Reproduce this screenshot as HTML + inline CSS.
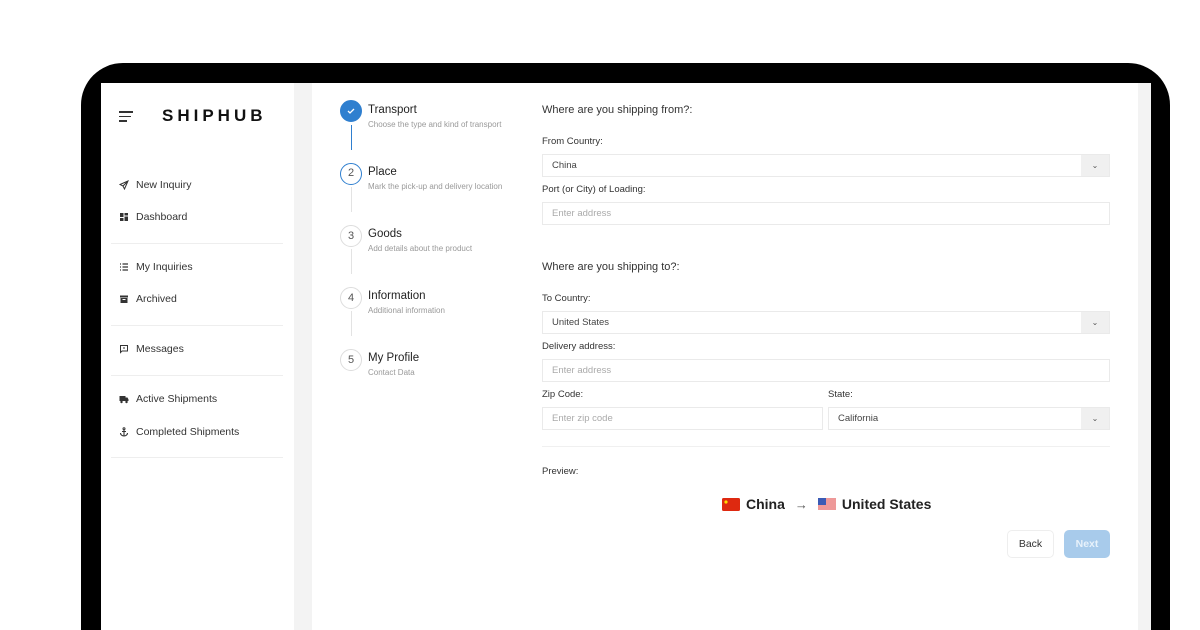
<!DOCTYPE html>
<html><head><meta charset="utf-8"><style>
*{box-sizing:border-box;margin:0;padding:0}
html{width:1200px;height:630px;overflow:hidden}
body{width:1200px;height:630px;background:#fff;font-family:"Liberation Sans",sans-serif;position:relative;overflow:hidden;color:#222}
.frame{position:absolute;left:81px;top:63px;width:1089px;height:567px;background:#000;border-radius:42px 42px 0 0}
.screen{position:absolute;left:101px;top:83px;width:1050px;height:547px;background:#f3f3f3}
.side{position:absolute;left:0;top:0;width:193px;height:547px;background:#fff}
.main{position:absolute;left:211px;top:0;width:826px;height:547px;background:#fff}
.abs{position:absolute}
.nav{position:absolute;left:18px;font-size:10.5px;color:#333;display:flex;align-items:center}
.nav svg{width:10px;height:10px;margin-right:7px}
.sep{position:absolute;left:10px;width:172px;height:1px;background:#eee}
.circ{position:absolute;left:0;width:22px;height:22px;border-radius:50%;border:1px solid #ddd;font-size:11px;color:#555;text-align:center;line-height:20px;background:#fff}
.st{position:absolute;font-size:11.5px;color:#222;white-space:nowrap}
.ss{position:absolute;font-size:8px;color:#999;white-space:nowrap}
.vl{position:absolute;width:1.5px;background:#e3e3e3}
.h{position:absolute;font-size:11px;color:#333}
.lbl{position:absolute;font-size:9.5px;color:#333}
.inp{position:absolute;height:23px;border:1px solid #eaeaea;background:#fff;font-size:9.5px;color:#aaa;padding-left:9px;line-height:21px}
.sel{color:#444}
.dd{position:absolute;right:0;top:0;width:28px;height:21px;background:#f0f0f0;font-size:8px;color:#555;text-align:center;line-height:21px}
</style></head><body>
<div class="frame"></div>
<div class="screen">
 <div class="side">
  <div class="abs" style="left:18px;top:28px;width:14px">
   <div style="height:1.5px;background:#333;width:14px;margin-bottom:3px"></div>
   <div style="height:1.5px;background:#333;width:12px;margin-bottom:3px"></div>
   <div style="height:1.5px;background:#333;width:8px"></div>
  </div>
  <div class="abs" style="left:61px;top:23px;font-size:17px;font-weight:bold;letter-spacing:4px;color:#111">SHIPHUB</div>
  <div class="nav" style="top:96px"><svg viewBox="0 0 10 10"><path d="M9 1L1 4.5 4 6 5.5 9z M4 6L9 1" fill="none" stroke="#333" stroke-width="1"/></svg>New Inquiry</div>
  <div class="nav" style="top:128px"><svg viewBox="0 0 10 10"><rect x="1" y="1" width="3.5" height="4" fill="#333"/><rect x="5.5" y="1" width="3.5" height="2.5" fill="#333"/><rect x="1" y="6" width="3.5" height="3" fill="#333"/><rect x="5.5" y="4.5" width="3.5" height="4.5" fill="#333"/></svg>Dashboard</div>
  <div class="sep" style="top:160px"></div>
  <div class="nav" style="top:178px"><svg viewBox="0 0 10 10"><path d="M1 2h1M3.5 2H9M1 5h1M3.5 5H9M1 8h1M3.5 8H9" stroke="#333" stroke-width="1.2"/></svg>My Inquiries</div>
  <div class="nav" style="top:210px"><svg viewBox="0 0 10 10"><rect x="1" y="1.5" width="8" height="2" fill="#333"/><rect x="1.5" y="4" width="7" height="5" fill="#333"/><rect x="3.5" y="5" width="3" height="1" fill="#fff"/></svg>Archived</div>
  <div class="sep" style="top:242px"></div>
  <div class="nav" style="top:260px"><svg viewBox="0 0 10 10"><path d="M1.5 1.5h7v5.5H3L1.5 8.5z" fill="none" stroke="#333"/><path d="M5 3v2" stroke="#333"/></svg>Messages</div>
  <div class="sep" style="top:292px"></div>
  <div class="nav" style="top:310px"><svg viewBox="0 0 10 10"><rect x="0.5" y="2" width="6" height="5" fill="#333"/><path d="M6.5 3.5h2l1 2v1.5h-3z" fill="#333"/><circle cx="2.5" cy="8" r="1.2" fill="#333"/><circle cx="7.5" cy="8" r="1.2" fill="#333"/></svg>Active Shipments</div>
  <div class="nav" style="top:343px"><svg viewBox="0 0 10 10"><circle cx="5" cy="1.8" r="1" fill="none" stroke="#333"/><path d="M5 3v6M3 4.5h4M1.5 6a3.5 3 0 0 0 7 0" fill="none" stroke="#333" stroke-width="1.1"/></svg>Completed Shipments</div>
  <div class="sep" style="top:374px"></div>
 </div>
 <div class="main">
  <div class="circ" style="left:28px;top:17px;background:#2f7fcf;border-color:#2f7fcf"><svg width="10" height="10" viewBox="0 0 10 10" style="margin-top:5px"><path d="M2 5l2 2 4-4" stroke="#fff" stroke-width="1.3" fill="none"/></svg></div>
  <div class="vl" style="left:38.5px;top:42px;height:25px;background:#2f7fcf"></div>
  <div class="st" style="left:56px;top:21px">Transport</div><div class="ss" style="left:56px;top:37px">Choose the type and kind of transport</div>
  <div class="circ" style="left:28px;top:80px;border:1.5px solid #2f7fcf;line-height:19px">2</div>
  <div class="vl" style="left:38.5px;top:104px;height:25px"></div>
  <div class="st" style="left:56px;top:83px">Place</div><div class="ss" style="left:56px;top:99px">Mark the pick-up and delivery location</div>
  <div class="circ" style="left:28px;top:142px">3</div>
  <div class="vl" style="left:38.5px;top:166px;height:25px"></div>
  <div class="st" style="left:56px;top:145px">Goods</div><div class="ss" style="left:56px;top:161px">Add details about the product</div>
  <div class="circ" style="left:28px;top:204px">4</div>
  <div class="vl" style="left:38.5px;top:228px;height:25px"></div>
  <div class="st" style="left:56px;top:207px">Information</div><div class="ss" style="left:56px;top:223px">Additional information</div>
  <div class="circ" style="left:28px;top:266px">5</div>
  <div class="st" style="left:56px;top:269px">My Profile</div><div class="ss" style="left:56px;top:285px">Contact Data</div>
  <div class="h" style="left:230px;top:21px">Where are you shipping from?:</div>
  <div class="lbl" style="left:230px;top:53px">From Country:</div>
  <div class="inp sel" style="left:230px;top:71px;width:568px">China<div class="dd">&#8964;</div></div>
  <div class="lbl" style="left:230px;top:101px">Port (or City) of Loading:</div>
  <div class="inp" style="left:230px;top:119px;width:568px">Enter address</div>
  <div class="h" style="left:230px;top:178px">Where are you shipping to?:</div>
  <div class="lbl" style="left:230px;top:210px">To Country:</div>
  <div class="inp sel" style="left:230px;top:228px;width:568px">United States<div class="dd">&#8964;</div></div>
  <div class="lbl" style="left:230px;top:258px">Delivery address:</div>
  <div class="inp" style="left:230px;top:276px;width:568px">Enter address</div>
  <div class="lbl" style="left:230px;top:306px">Zip Code:</div>
  <div class="inp" style="left:230px;top:324px;width:281px">Enter zip code</div>
  <div class="lbl" style="left:516px;top:306px">State:</div>
  <div class="inp sel" style="left:516px;top:324px;width:282px">California<div class="dd">&#8964;</div></div>
  <div class="abs" style="left:230px;top:363px;width:568px;height:1px;background:#f0f0f0"></div>
  <div class="lbl" style="left:230px;top:383px">Preview:</div>
  <div class="abs" style="left:410px;top:413px;display:flex;align-items:center;font-size:14px;font-weight:bold;color:#222">
   <svg width="18" height="13" viewBox="0 0 18 13"><rect width="18" height="13" rx="1.5" fill="#de2910"/><circle cx="4" cy="4" r="1.6" fill="#ffde00"/></svg>
   <span style="margin-left:6px">China</span>
   <span style="margin:0 10px;font-weight:normal;color:#555;font-size:13px">&rarr;</span>
   <svg width="18" height="13" viewBox="0 0 18 13"><rect width="18" height="13" rx="1.5" fill="#fff"/><path d="M0 1h18M0 3h18M0 5h18M0 7h18M0 9h18M0 11h18" stroke="#d33" stroke-width="1"/><rect width="8" height="7" fill="#3b5bb5"/></svg>
   <span style="margin-left:6px">United States</span>
  </div>
  <div class="abs" style="left:695px;top:447px;width:47px;height:28px;border:1px solid #eee;border-radius:5px;font-size:10.5px;text-align:center;line-height:26px;color:#333">Back</div>
  <div class="abs" style="left:752px;top:447px;width:46px;height:28px;background:#a8cbeb;border-radius:5px;font-size:10.5px;font-weight:bold;text-align:center;line-height:28px;color:#e8f2fb">Next</div>
 </div>
</div>
</body></html>
